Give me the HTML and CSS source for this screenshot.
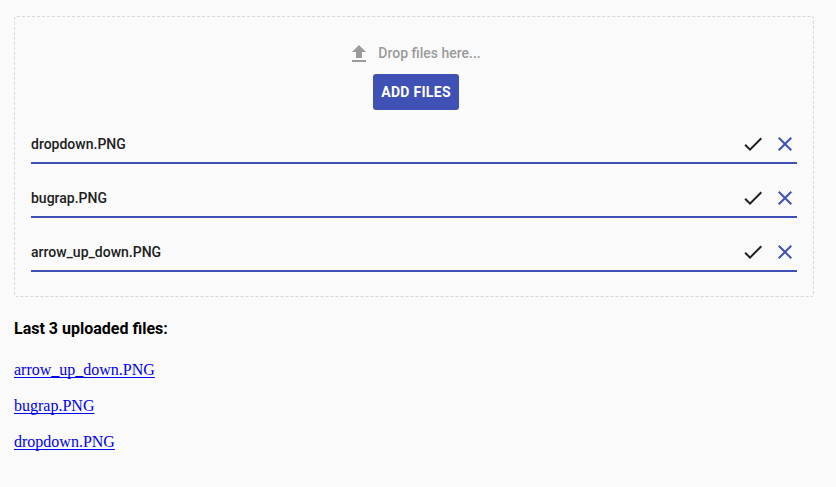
FILE: index.html
```html
<!DOCTYPE html>
<html lang="en">
<head>
<meta charset="utf-8">
<title>Upload</title>
<link rel="stylesheet" href="styles.css">
</head>
<body>
<section class="upload">
  <div class="drop-label">
    <svg class="upload-icon" viewBox="0 0 24 24"><path d="M9 16h6v-6h4l-7-7-7 7h4zm-4 2h14v2H5z"/></svg>
    <span class="drop-text">Drop files here...</span>
  </div>
  <button class="add" type="button">ADD FILES</button>
  <ul class="files">
    <li class="file">
      <span class="name">dropdown.PNG</span>
      <svg class="icon" viewBox="0 0 24 24"><path d="M9 16.17L4.83 12l-1.42 1.41L9 19 21 7l-1.41-1.41z"/></svg>
      <svg class="icon clear" viewBox="0 0 24 24"><path d="M19 6.41L17.59 5 12 10.59 6.41 5 5 6.41 10.59 12 5 17.59 6.41 19 12 13.41 17.59 19 19 17.59 13.41 12z"/></svg>
    </li>
    <li class="file">
      <span class="name">bugrap.PNG</span>
      <svg class="icon" viewBox="0 0 24 24"><path d="M9 16.17L4.83 12l-1.42 1.41L9 19 21 7l-1.41-1.41z"/></svg>
      <svg class="icon clear" viewBox="0 0 24 24"><path d="M19 6.41L17.59 5 12 10.59 6.41 5 5 6.41 10.59 12 5 17.59 6.41 19 12 13.41 17.59 19 19 17.59 13.41 12z"/></svg>
    </li>
    <li class="file">
      <span class="name">arrow_up_down.PNG</span>
      <svg class="icon" viewBox="0 0 24 24"><path d="M9 16.17L4.83 12l-1.42 1.41L9 19 21 7l-1.41-1.41z"/></svg>
      <svg class="icon clear" viewBox="0 0 24 24"><path d="M19 6.41L17.59 5 12 10.59 6.41 5 5 6.41 10.59 12 5 17.59 6.41 19 12 13.41 17.59 19 19 17.59 13.41 12z"/></svg>
    </li>
  </ul>
</section>
<h4 class="heading">Last 3 uploaded files:</h4>
<nav class="links">
  <a href="#a">arrow_up_down.PNG</a>
  <a href="#b">bugrap.PNG</a>
  <a href="#c">dropdown.PNG</a>
</nav>
</body>
</html>
```
FILE: styles.css
```css
* { box-sizing: border-box; }
body {
  margin: 0;
  padding: 16px 22px 0 14px;
  background: #fafafa;
  font-family: Roboto, sans-serif;
}
.upload {
  width: 800px;
  height: 281px;
  padding: 25px 16px 0;
  border: 1px dashed #d8d8d8;
  border-radius: 3px;
  display: flex;
  flex-direction: column;
  align-items: center;
}
.drop-label {
  display: flex;
  align-items: center;
  gap: 7px;
  height: 24px;
  color: #9b9b9b;
  font-size: 14px;
  font-weight: 500;
}
.drop-text { padding-bottom: 2px; }
.upload-icon { width: 24px; height: 24px; fill: #9b9b9b; }
.add {
  width: 86px;
  height: 36px;
  margin: 8px 0 0 4px;
  padding: 0;
  border: 0;
  border-radius: 3px;
  background: #3f51b5;
  color: #fff;
  font: 700 14px Roboto, sans-serif;
  letter-spacing: 0.3px;
}
.files {
  width: 100%;
  margin: 0;
  padding: 0;
  list-style: none;
}
.file {
  display: flex;
  align-items: center;
  height: 54px;
  padding: 16px 0 0;
  border-bottom: 2px solid #3f51b5;
  color: #212121;
  font-size: 14px;
  font-weight: 500;
}
.name { flex: 1; }
.icon { width: 24px; height: 24px; margin-right: 8px; fill: #212121; }
.clear { margin-right: 0; fill: #3f51b5; }
.heading {
  margin: 21px 0 0;
  font-size: 16px;
  line-height: 22px;
  font-weight: 700;
}
.links {
  display: flex;
  flex-direction: column;
  align-items: flex-start;
  gap: 16px;
  margin-top: 20px;
  font: 16px/20px "Liberation Serif", serif;
}
.links a {
  color: #0000ee;
  text-decoration-skip-ink: none;
  text-underline-offset: 2px;
}
```
